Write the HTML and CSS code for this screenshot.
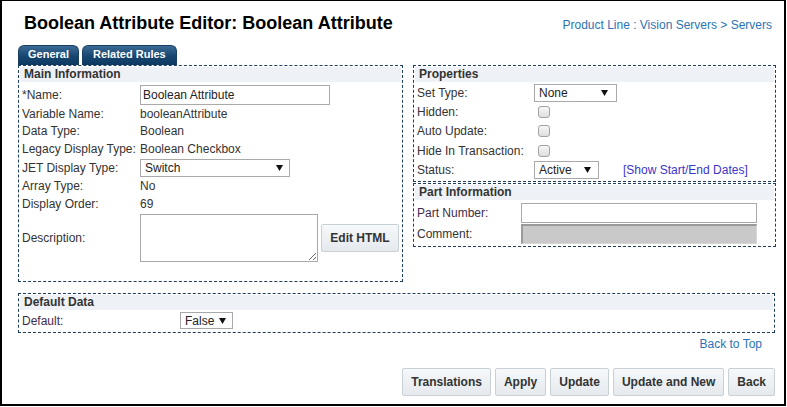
FILE: index.html
```html
<!DOCTYPE html>
<html>
<head>
<meta charset="utf-8">
<title>Boolean Attribute Editor</title>
<link rel="stylesheet" href="styles.css">
</head>
<body>
<div class="page">
  <div class="topbar">
    <h1 class="title">Boolean Attribute Editor: Boolean Attribute</h1>
    <a class="crumb" href="#">Product Line : Vision Servers &gt; Servers</a>
  </div>
  <div class="tabs">
    <span class="tab">General</span>
    <span class="tab tab-wide">Related Rules</span>
  </div>
  <div class="grid">
    <div class="panel main-panel">
      <div class="phead">Main Information</div>
      <div class="row h-name"><span class="lbl w118">*Name:</span><span class="input w-name">Boolean Attribute</span></div>
      <div class="row h-text"><span class="lbl w118">Variable Name:</span><span>booleanAttribute</span></div>
      <div class="row h-text"><span class="lbl w118">Data Type:</span><span>Boolean</span></div>
      <div class="row h-text"><span class="lbl w118">Legacy Display Type:</span><span>Boolean Checkbox</span></div>
      <div class="row h-sel"><span class="lbl w118">JET Display Type:</span><span class="select w-jet"><span>Switch</span><svg class="caret" width="7" height="6" viewBox="0 0 7 6"><path d="M0 0H7L3.5 6Z"/></svg></span></div>
      <div class="row h-text"><span class="lbl w118">Array Type:</span><span>No</span></div>
      <div class="row h-text"><span class="lbl w118">Display Order:</span><span>69</span></div>
      <div class="row h-desc"><span class="lbl w118">Description:</span><textarea class="textarea"></textarea><button class="btn btn-edit">Edit HTML</button></div>
    </div>
    <div class="rightcol">
      <div class="panel props-panel">
        <div class="phead">Properties</div>
        <div class="row h-set"><span class="lbl w117">Set Type:</span><span class="select w-set"><span>None</span><svg class="caret" width="7" height="6" viewBox="0 0 7 6"><path d="M0 0H7L3.5 6Z"/></svg></span></div>
        <div class="row h-chk"><span class="lbl w117">Hidden:</span><input type="checkbox" class="chk"></div>
        <div class="row h-chk"><span class="lbl w117">Auto Update:</span><input type="checkbox" class="chk"></div>
        <div class="row h-chk"><span class="lbl w117">Hide In Transaction:</span><input type="checkbox" class="chk"></div>
        <div class="row h-status"><span class="lbl w117">Status:</span><span class="select w-status"><span>Active</span><svg class="caret" width="7" height="6" viewBox="0 0 7 6"><path d="M0 0H7L3.5 6Z"/></svg></span><a class="dates" href="#">[Show Start/End Dates]</a></div>
      </div>
      <div class="panel part-panel">
        <div class="phead">Part Information</div>
        <div class="row h-part first"><span class="lbl w104 purple">Part Number:</span><span class="input w-part"></span></div>
        <div class="row h-part"><span class="lbl w104">Comment:</span><span class="input w-part disabled"></span></div>
      </div>
    </div>
  </div>
  <div class="panel default-panel">
    <div class="phead">Default Data</div>
    <div class="row h-def"><span class="lbl w158 purple">Default:</span><span class="select w-def"><span>False</span><svg class="caret" width="7" height="6" viewBox="0 0 7 6"><path d="M0 0H7L3.5 6Z"/></svg></span></div>
  </div>
  <div class="totop"><a href="#">Back to Top</a></div>
  <div class="actions">
    <button class="btn">Translations</button>
    <button class="btn">Apply</button>
    <button class="btn">Update</button>
    <button class="btn">Update and New</button>
    <button class="btn">Back</button>
  </div>
</div>
</body>
</html>
```
FILE: styles.css
```css
html, body {
  margin: 0;
  padding: 0;
  background: #fff;
}
body {
  font-family: "Liberation Sans", Arial, sans-serif;
  font-size: 12px;
  color: #333;
}
.page {
  box-sizing: border-box;
  width: 786px;
  height: 406px;
  border: 2px solid #000;
  border-top-width: 1px;
  padding: 12px 9px 0 16px;
}
.topbar {
  display: flex;
  justify-content: space-between;
  align-items: baseline;
}
.title {
  margin: 0;
  padding-left: 6px;
  font-size: 18px;
  line-height: 21px;
  font-weight: bold;
  color: #000;
}
.crumb {
  margin-right: 3px;
  font-size: 12px;
  color: #2a74b5;
  text-decoration: none;
}
.tabs {
  display: flex;
  gap: 3px;
  margin-top: 11px;
  height: 20px;
}
.tab {
  box-sizing: border-box;
  height: 20px;
  padding: 0 9px;
  line-height: 16px;
  font-size: 11px;
  font-weight: bold;
  color: #fff;
  background: linear-gradient(#3b6a96, #16456f 55%, #0d3961);
  border: 1px solid #1a3e62;
  border-bottom: none;
  border-radius: 6px 6px 0 0;
}
.tab-wide { padding: 0 10px; }
.grid {
  display: grid;
  grid-template-columns: 385px 363px;
  column-gap: 10px;
  align-items: start;
}
.panel {
  border: 1px dashed #1c3d5e;
  padding: 1px;
}
.phead {
  height: 15px;
  line-height: 15px;
  padding-left: 4px;
  font-weight: bold;
  font-size: 12px;
  color: #333;
  background: #eef2f6;
}
.row {
  display: flex;
  align-items: center;
  padding-left: 2px;
  box-sizing: border-box;
}
.lbl { flex: none; }
.w118 { width: 118px; }
.w117 { width: 117px; }
.w104 { width: 104px; }
.w158 { width: 158px; }
.purple { color: #3f2c4c; }

.main-panel { padding-bottom: 18px; }
.h-name { height: 23px; padding-top: 2px; }
.h-text { height: 17.5px; }
.h-sel { height: 20px; }
.h-desc { height: 50px; }

.input {
  box-sizing: border-box;
  display: inline-block;
  height: 20px;
  line-height: 18px;
  border: 1px solid #a9a9a9;
  background: #fff;
  padding-left: 2px;
  font-size: 12px;
  color: #222;
}
.w-name { width: 190px; }
.w-part { width: 236px; }
.input.disabled {
  background: #c9c9c9;
  border-color: #9a9a9a #d6d6d6 #d6d6d6 #9a9a9a;
  border-width: 2px 1px 1px 2px;
}
.select {
  box-sizing: border-box;
  display: inline-flex;
  align-items: center;
  justify-content: space-between;
  height: 18px;
  border: 1px solid #a9a9a9;
  background: #fff;
  padding: 0 6px 0 4px;
  color: #222;
  font-size: 12px;
}
.caret { fill: #111; flex: none; }
.w-jet { width: 150px; }
.w-set { width: 83px; height: 18px; padding-right: 8px; }
.w-status { width: 65px; padding-right: 7px; }
.w-def { width: 53px; height: 17px; }

.textarea {
  box-sizing: border-box;
  width: 178px;
  height: 48px;
  margin: 0;
  border: 1px solid #a9a9a9;
  font-family: inherit;
  font-size: 12px;
  resize: both;
}
.btn {
  box-sizing: border-box;
  height: 28px;
  padding: 0 8px;
  border: 1px solid #c8d0d8;
  border-radius: 2px;
  background: linear-gradient(#f6f8fa, #e5e9ed);
  font-family: "Liberation Sans", Arial, sans-serif;
  font-size: 12px;
  font-weight: bold;
  color: #333;
}
.btn-edit {
  width: 78px;
  margin-left: 3px;
  padding: 0;
}

.rightcol {
  display: flex;
  flex-direction: column;
  gap: 1px;
}
.props-panel { padding-bottom: 1px; }
.h-set { height: 20px; padding-top: 1px; }
.h-chk { height: 19.5px; }
.h-status { height: 19px; }
.chk {
  appearance: none;
  -webkit-appearance: none;
  box-sizing: border-box;
  width: 12px;
  height: 12px;
  margin: 0 0 0 4px;
  border: 1px solid #a3a3a3;
  border-radius: 3px;
  background: linear-gradient(#f7f7f7, #dedede);
}
.dates {
  margin-left: 24px;
  color: #3b35c9;
  text-decoration: none;
}
.part-panel { padding-bottom: 1px; }
.h-part { height: 21px; }
.h-part.first { height: 24px; padding-top: 3px; }

.default-panel {
  margin-top: 11px;
  padding-bottom: 1px;
}
.phead + .h-def { margin-top: 1px; }
.h-def { height: 20px; }

.totop {
  margin-top: 4px;
  line-height: 14px;
  text-align: right;
  padding-right: 13px;
}
.totop a {
  color: #2a74b5;
  text-decoration: none;
}
.actions {
  display: flex;
  justify-content: flex-end;
  gap: 4px;
  margin-top: 17px;
}
```
